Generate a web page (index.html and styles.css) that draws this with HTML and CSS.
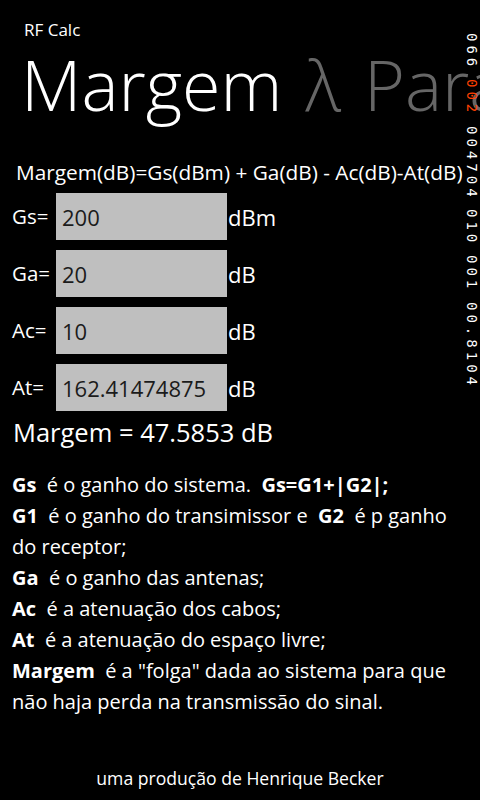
FILE: index.html
```html
<!DOCTYPE html>
<html lang="pt">
<head>
  <meta charset="UTF-8">
  <meta name="viewport" content="width=device-width, initial-scale=1.0">
  <title>RF Calc</title>
  <link rel="stylesheet" href="styles.css">
</head>
<body>
  <div class="page">
    <header class="title-panel">
      <div class="app-name">RF Calc</div>
      <div class="page-title">Margem <span class="next-title">λ Para</span></div>
    </header>

    <main class="content">
      <p class="formula">Margem(dB)=Gs(dBm) + Ga(dB) - Ac(dB)-At(dB)</p>

      <div class="field-row">
        <span class="field-label">Gs=</span>
        <div class="field-box">200</div>
        <span class="field-unit">dBm</span>
      </div>
      <div class="field-row">
        <span class="field-label">Ga=</span>
        <div class="field-box">20</div>
        <span class="field-unit">dB</span>
      </div>
      <div class="field-row">
        <span class="field-label">Ac=</span>
        <div class="field-box">10</div>
        <span class="field-unit">dB</span>
      </div>
      <div class="field-row">
        <span class="field-label">At=</span>
        <div class="field-box">162.41474875</div>
        <span class="field-unit">dB</span>
      </div>

      <p class="result">Margem = 47.5853 dB</p>

      <div class="notes">
        <p><b>Gs</b>&nbsp; é o ganho do sistema.&nbsp; <b>Gs=G1+|G2|;</b></p>
        <p><b>G1</b>&nbsp; é o ganho do transimissor e&nbsp; <b>G2</b>&nbsp; é p ganho do receptor;</p>
        <p><b>Ga</b>&nbsp; é o ganho das antenas;</p>
        <p><b>Ac</b>&nbsp; é a atenuação dos cabos;</p>
        <p><b>At</b>&nbsp; é a atenuação do espaço livre;</p>
        <p><b>Margem</b>&nbsp; é a "folga" dada ao sistema para que não haja perda na transmissão do sinal.</p>
      </div>
    </main>

    <footer class="credit">uma produção de Henrique Becker</footer>
  </div>

  <!-- frame rate counters drawn by the emulator -->
  <div class="counters">
    <span>066</span>
    <span class="hot">002</span>
    <span>004704</span>
    <span>010</span>
    <span>001</span>
    <span>00.8104</span>
  </div>
</body>
</html>
```

FILE: styles.css
```css
html, body {
  margin: 0;
  padding: 0;
  background-color: #000;
}

body {
  width: 480px;
  height: 800px;
  overflow: hidden;
  position: relative;
  color: #fff;
  font-family: "Open Sans", "Noto Sans", sans-serif;
}

.page {
  height: 800px;
  display: flex;
  flex-direction: column;
}

p {
  margin: 0;
}

.title-panel {
  padding: 20px 0 0 24px;
  white-space: nowrap;
}

.app-name {
  font-size: 17px;
  line-height: 20px;
}

.page-title {
  margin-top: 4px;
  margin-left: -3px;
  font-size: 70px;
  font-weight: 300;
  line-height: 80px;
  word-spacing: 5px;
}

.next-title {
  color: #666;
}

.content {
  padding: 0 12px;
}

.formula {
  margin-top: 36px;
  padding-left: 4px;
  font-size: 20.8px;
  line-height: 24px;
  white-space: nowrap;
}

.field-row {
  display: flex;
  align-items: flex-start;
  margin-top: 10px;
}

.field-row:first-of-type {
  margin-top: 9px;
}

.field-label {
  width: 44px;
  padding-top: 11px;
  font-size: 20.5px;
  line-height: 24px;
}

.field-box {
  width: 171px;
  height: 47px;
  padding: 2px 0 0 6px;
  box-sizing: border-box;
  background-color: #bfbfbf;
  color: #1b1b1b;
  font-size: 22px;
  line-height: 45px;
}

.field-unit {
  padding: 2px 0 0 1px;
  font-size: 22px;
  line-height: 45px;
}

.result {
  margin-top: 5px;
  padding-left: 1px;
  font-size: 25.5px;
  line-height: 32px;
}

.notes {
  margin-top: 21px;
  font-size: 20px;
  line-height: 31px;
}

.notes b {
  font-weight: 700;
}

.credit {
  margin-top: auto;
  padding-bottom: 10px;
  text-align: center;
  font-size: 17.6px;
  line-height: 24px;
}

.counters {
  position: absolute;
  top: 33px;
  right: 2px;
  display: flex;
  flex-direction: column;
  gap: 9px;
  font-family: "DejaVu Sans Mono", monospace;
  font-size: 14px;
  letter-spacing: 4px;
  line-height: 12px;
  color: #fff;
}

.counters span {
  writing-mode: vertical-rl;
}

.counters .hot {
  color: #ff4000;
}
```
